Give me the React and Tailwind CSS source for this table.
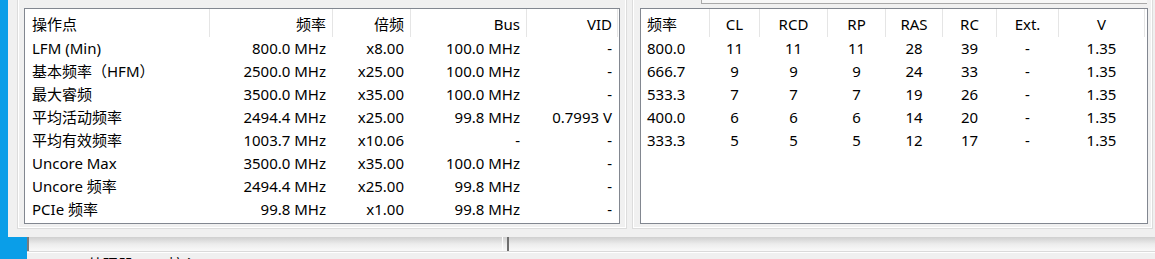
import React from 'react'

const opCols = [
  { title: '操作点', w: 'w-[185px]', align: 'text-left pl-[7px]' },
  { title: '频率', w: 'w-[123px]', align: 'text-right pr-[6px]' },
  { title: '倍频', w: 'w-[78px]', align: 'text-right pr-[6px]' },
  { title: 'Bus', w: 'w-[116px]', align: 'text-right pr-[6px]' },
  { title: 'VID', w: 'w-[91px]', align: 'text-right pr-[5px]' },
]

const opRows = [
  ['LFM (Min)', '800.0 MHz', 'x8.00', '100.0 MHz', '-'],
  ['基本频率（HFM）', '2500.0 MHz', 'x25.00', '100.0 MHz', '-'],
  ['最大睿频', '3500.0 MHz', 'x35.00', '100.0 MHz', '-'],
  ['平均活动频率', '2494.4 MHz', 'x25.00', '99.8 MHz', '0.7993 V'],
  ['平均有效频率', '1003.7 MHz', 'x10.06', '-', '-'],
  ['Uncore Max', '3500.0 MHz', 'x35.00', '100.0 MHz', '-'],
  ['Uncore 频率', '2494.4 MHz', 'x25.00', '99.8 MHz', '-'],
  ['PCIe 频率', '99.8 MHz', 'x1.00', '99.8 MHz', '-'],
]

const memCols = [
  { title: '频率', w: 'w-[69px]', align: 'text-left pl-[6px]' },
  { title: 'CL', w: 'w-[50px]', align: 'text-center' },
  { title: 'RCD', w: 'w-[68px]', align: 'text-center' },
  { title: 'RP', w: 'w-[58px]', align: 'text-center' },
  { title: 'RAS', w: 'w-[57px]', align: 'text-center' },
  { title: 'RC', w: 'w-[54px]', align: 'text-center' },
  { title: 'Ext.', w: 'w-[62px]', align: 'text-center' },
  { title: 'V', w: 'w-[86px]', align: 'text-center' },
]

const memRows = [
  ['800.0', '11', '11', '11', '28', '39', '-', '1.35'],
  ['666.7', '9', '9', '9', '24', '33', '-', '1.35'],
  ['533.3', '7', '7', '7', '19', '26', '-', '1.35'],
  ['400.0', '6', '6', '6', '14', '20', '-', '1.35'],
  ['333.3', '5', '5', '5', '12', '17', '-', '1.35'],
]

function ListView({ cols, rows, width }) {
  return (
    <div className={`${width} h-[216px] bg-white border border-[#828790] overflow-hidden`}>
      <div className="flex h-[28px] items-center">
        {cols.map((c) => (
          <div
            key={c.title}
            className={`${c.w} ${c.align} shrink-0 h-[28px] leading-[30px] border-r border-[#e5e5e5] whitespace-nowrap`}
          >
            {c.title}
          </div>
        ))}
      </div>
      {rows.map((r, i) => (
        <div key={i} className="flex h-[23px]">
          {r.map((v, j) => (
            <div
              key={j}
              className={`${cols[j].w} ${cols[j].align} shrink-0 leading-[23px] border-r border-transparent whitespace-nowrap`}
            >
              {v}
            </div>
          ))}
        </div>
      ))}
    </div>
  )
}

export default function App() {
  return (
    <div className="relative w-[1155px] h-[259px] overflow-hidden bg-[#0a9ee8] text-[15px] text-black font-[family-name:'Noto_Sans','Noto_Sans_CJK_SC',sans-serif]">
      {/* window behind the dialog, its status line mostly below the screen edge */}
      <div className="absolute left-[27px] top-[237px] right-0 bottom-0 bg-[#f0f0f0] flex flex-col overflow-hidden">
        <div className="shrink-0 flex h-[14px] bg-gradient-to-b from-[#cfcfcf] via-[#ececec] to-[#f9f9f9]">
          <div className="w-[2px] bg-[#7b7b7b]" />
          <div className="w-[474px] border-r border-[#fbfbfb]" />
          <div className="w-[4px]" />
          <div className="w-[2px] bg-[#6f6f6f]" />
        </div>
        <div className="shrink-0 h-[1px] bg-[#dadada]" />
        <div className="shrink-0 h-[1px] bg-white" />
        <div className="shrink-0 pl-[61px] mt-[1px] leading-[20px] whitespace-nowrap">
          处理器 #0 - 核心 #0 - 2494.4 MHz
        </div>
      </div>

      {/* dialog */}
      <div className="absolute left-[8px] top-0 w-[1147px] h-[237px] bg-[#f0f0f0] flex items-start">
        <div className="ml-[9px] w-[610px] h-[229px] border-x border-b border-[#dcdcdc] shadow-[inset_1px_0_0_#fff,inset_-1px_0_0_#fff,inset_0_-1px_0_#fff] px-[6px] pt-[8px]">
          <ListView cols={opCols} rows={opRows} width="w-[596px]" />
        </div>
        <div className="ml-[5px] w-[521px] h-[229px] border-x border-b border-[#dcdcdc] shadow-[inset_1px_0_0_#fff,inset_-1px_0_0_#fff,inset_0_-1px_0_#fff] pl-[7px]">
          <div className="ml-[61px] w-[446px] h-[4px] border-l border-b border-[#a9a9a9] bg-[#f7f7f7]" />
          <div className="mt-[4px]">
            <ListView cols={memCols} rows={memRows} width="w-[508px]" />
          </div>
        </div>
      </div>
    </div>
  )
}
